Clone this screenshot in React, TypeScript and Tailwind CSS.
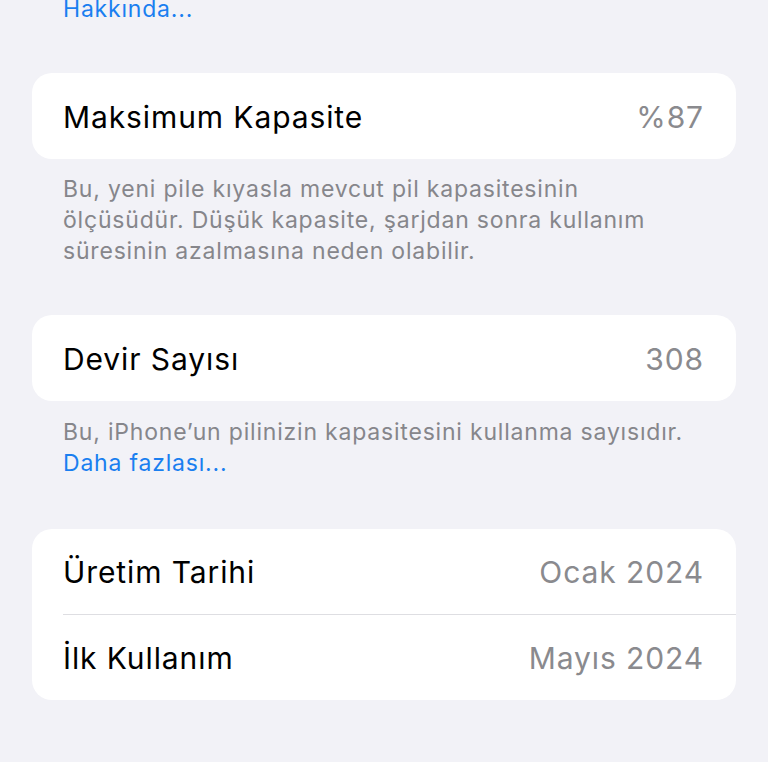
import React from 'react';

// Battery health detail list, grouped iOS settings style
interface Row {
  label: string;
  value: string;
}

const font = { fontFamily: 'Inter, "Noto Sans", "Liberation Sans", sans-serif' };

const Card: React.FC<{ rows: Row[] }> = ({ rows }) => (
  <div className="bg-white rounded-[20px] overflow-hidden">
    {rows.map((row, i) => (
      <div key={row.label}>
        {i > 0 && <div className="ml-[31px] h-px bg-[#dedee2]" />}
        <div
          className={`${rows.length > 1 ? 'h-[85px]' : 'h-[86px]'} flex items-center justify-between pl-[31px] pr-[32px] pt-[2px] text-[30px] tracking-[0.9px]`}
        >
          <span className="text-black">{row.label}</span>
          <span className="text-[#8a8a8e]">{row.value}</span>
        </div>
      </div>
    ))}
  </div>
);

const Footer: React.FC<{ children: React.ReactNode }> = ({ children }) => (
  <div className="px-[31px] text-[23px] leading-[31px] tracking-[0.8px] text-[#86868b]">{children}</div>
);

export default function App() {
  return (
    <div className="min-h-[768px] bg-[#f2f2f7] px-[32px] pb-[60px]" style={font}>
      <div className="-mt-[6px] px-[31px] text-[23px] leading-[31px] tracking-[0.8px] text-[#1a7ff0]">
        Hakkında...
      </div>

      <div className="mt-[48px]">
        <Card rows={[{ label: 'Maksimum Kapasite', value: '%87' }]} />
      </div>
      <div className="mt-[15px]">
        <Footer>
          Bu, yeni pile kıyasla mevcut pil kapasitesinin
          <br />
          ölçüsüdür. Düşük kapasite, şarjdan sonra kullanım
          <br />
          süresinin azalmasına neden olabilir.
        </Footer>
      </div>

      <div className="mt-[48px]">
        <Card rows={[{ label: 'Devir Sayısı', value: '308' }]} />
      </div>
      <div className="mt-[16px]">
        <Footer>
          Bu, iPhone’un pilinizin kapasitesini kullanma sayısıdır.
          <br />
          <span className="text-[#1a7ff0]">Daha fazlası...</span>
        </Footer>
      </div>

      <div className="mt-[50px]">
        <Card
          rows={[
            { label: 'Üretim Tarihi', value: 'Ocak 2024' },
            { label: 'İlk Kullanım', value: 'Mayıs 2024' },
          ]}
        />
      </div>
    </div>
  );
}
